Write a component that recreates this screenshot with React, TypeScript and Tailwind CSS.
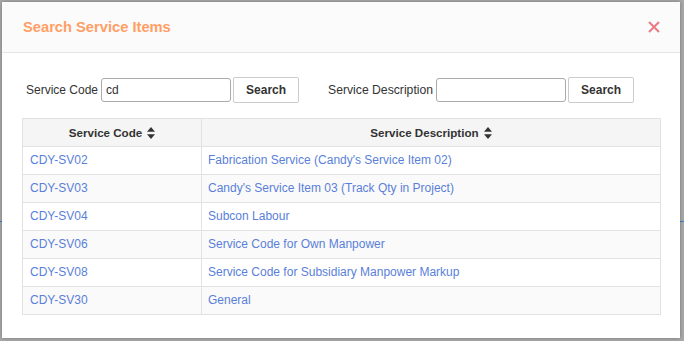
import React from "react";

const rows = [
  { code: "CDY-SV02", desc: "Fabrication Service (Candy's Service Item 02)" },
  { code: "CDY-SV03", desc: "Candy's Service Item 03 (Track Qty in Project)" },
  { code: "CDY-SV04", desc: "Subcon Labour" },
  { code: "CDY-SV06", desc: "Service Code for Own Manpower" },
  { code: "CDY-SV08", desc: "Service Code for Subsidiary Manpower Markup" },
  { code: "CDY-SV30", desc: "General" },
];

function SortIcon() {
  return (
    <svg width="8" height="12" viewBox="0 0 8 12" className="inline-block ml-[5px] -mt-[2px]">
      <path d="M4 0 L8 4.8 H0 Z" fill="#333" />
      <path d="M4 12 L8 7.2 H0 Z" fill="#333" />
    </svg>
  );
}

export default function App() {
  return (
    <div
      className="relative w-[684px] h-[341px] bg-[#a9a9a9] overflow-hidden"
      style={{ fontFamily: '"Liberation Sans", Arial, sans-serif' }}
    >
      {/* page underneath */}
      <div className="absolute left-0 right-0 top-[221px] h-[1px] bg-[#3b7fd4]" />

      <div className="relative ml-[2px] mt-[2px] w-[678px] h-[336px] bg-white shadow-[0_0_4px_rgba(0,0,0,0.3)]">
        {/* Header */}
        <div className="flex items-center justify-between h-[51px] bg-[#fbfbfb] border-b border-[#e5e5e5] pl-[21px] pr-[20px]">
          <h3 className="text-[14.7px] font-bold text-[#ff9f66] mt-[1px]">Search Service Items</h3>
          <svg width="12" height="12" viewBox="0 0 12 12" className="mt-[0px]">
            <path d="M1 1 L11 11 M11 1 L1 11" stroke="#ea7a84" strokeWidth="2" />
          </svg>
        </div>

        {/* Search row */}
        <div className="flex items-center pl-[24px] pt-[24px] text-[12px] text-[#333]">
          <span>Service Code</span>
          <input
            defaultValue="cd"
            className="ml-[3px] w-[130px] h-[24px] border border-[#aaa] rounded-[3px] px-[4px] text-[12px] text-[#333] outline-none"
          />
          <button className="ml-[2px] w-[66px] h-[26px] border border-[#ccc] rounded-[2px] bg-white font-bold text-[12px] text-[#333]">
            Search
          </button>
          <span className="ml-[29px] text-[12.2px]">Service Description</span>
          <input className="ml-[3px] w-[130px] h-[24px] border border-[#aaa] rounded-[3px] px-[4px] text-[12px] outline-none" />
          <button className="ml-[2px] w-[66px] h-[26px] border border-[#ccc] rounded-[2px] bg-white font-bold text-[12px] text-[#333]">
            Search
          </button>
        </div>

        {/* Table */}
        <table className="ml-[20px] mt-[15px] w-[639px] border-collapse text-[12px]">
          <thead>
            <tr className="bg-[#f5f5f5] h-[28px]">
              <th className="w-[179px] border border-[#e2e2e2] font-bold text-[11.6px] text-[#333]">
                Service Code
                <SortIcon />
              </th>
              <th className="border border-[#e2e2e2] font-bold text-[11.6px] text-[#333]">
                Service Description
                <SortIcon />
              </th>
            </tr>
          </thead>
          <tbody>
            {rows.map((r, i) => (
              <tr key={r.code} className={i % 2 === 1 ? "h-[28px] bg-[#fafafa]" : "h-[28px] bg-white"}>
                <td className="border border-[#e2e2e2] pl-[7px] pb-[1px] text-[#5a7fd9]">{r.code}</td>
                <td className="border border-[#e2e2e2] pl-[6px] pb-[1px] text-[#5a7fd9]">{r.desc}</td>
              </tr>
            ))}
          </tbody>
        </table>
      </div>
    </div>
  );
}
